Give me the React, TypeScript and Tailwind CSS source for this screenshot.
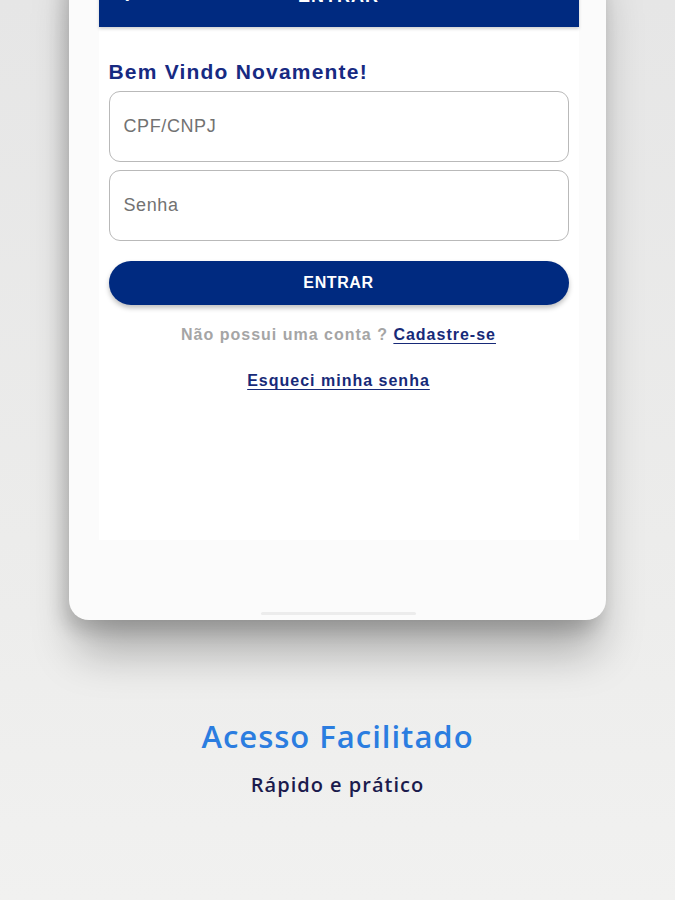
import React from "react";

export default function App() {
  const sans = { fontFamily: '"Liberation Sans", Arial, sans-serif' };
  const display = { fontFamily: '"Open Sans", "Noto Sans", sans-serif' };
  return (
    <div className="relative w-[675px] h-[900px] overflow-hidden bg-[linear-gradient(180deg,#e6e6e6_0%,#ececeb_60%,#f1f1f0_100%)]">
      <div className="flex flex-col items-center">
        {/* phone */}
        <div className="ml-[-1px] mt-[-60px] w-[537px] h-[680px] rounded-[20px] bg-[#fbfbfb] shadow-[0_40px_45px_-8px_rgba(0,0,0,0.28),-6px_10px_18px_rgba(0,0,0,0.16)] pl-[30px] pr-[27px] flex flex-col">
          <div className="h-[600px] bg-white flex flex-col" style={sans}>
            {/* header */}
            <div className="h-[87px] bg-[#002a80] shadow-[0_2px_3px_rgba(0,0,0,0.18)] relative flex items-end justify-center pb-[22px]">
              <span className="absolute left-[24px] bottom-[20px] text-white text-[22px] font-bold leading-none">‹</span>
              <span className="text-white text-[18px] font-bold leading-none tracking-[1px]">ENTRAR</span>
            </div>
            <div className="px-[10px] flex flex-col">
              <h1 className="mt-[33px] text-[21px] leading-[24px] font-bold text-[#172a82] tracking-[1.2px]">Bem Vindo Novamente!</h1>
              <div className="mt-[7px] h-[71px] rounded-[11px] border border-[#b9b9b9] flex items-center px-[14px]">
                <span className="text-[18px] text-[#727272] tracking-[0.6px]">CPF/CNPJ</span>
              </div>
              <div className="mt-[8px] h-[71px] rounded-[11px] border border-[#b9b9b9] flex items-center px-[14px]">
                <span className="text-[18px] text-[#727272] tracking-[0.6px]">Senha</span>
              </div>
              <button className="mt-[20px] h-[44px] rounded-full bg-[#002a80] shadow-[0_3px_5px_rgba(0,0,0,0.25)] text-white text-[16px] font-bold tracking-[0.6px] flex items-center justify-center">
                ENTRAR
              </button>
              <p className="mt-[20px] text-center text-[16px] leading-[20px] font-bold tracking-[1px]">
                <span className="text-[#a5a5a5]">Não possui uma conta ? </span>
                <span className="text-[#172a78] underline underline-offset-[3px]">Cadastre-se</span>
              </p>
              <p className="mt-[26px] text-center text-[16px] leading-[20px] font-bold tracking-[1px] text-[#172a78] underline underline-offset-[3px]">
                Esqueci minha senha
              </p>
            </div>
          </div>
          <div className="flex-1 flex items-end justify-center pb-[5px]">
            <div className="w-[155px] h-[3px] rounded-full bg-[#ececec]" />
          </div>
        </div>

        <h2 className="mt-[98px] text-[31px] leading-[36px] font-semibold text-[#2b7de0] tracking-[1px]" style={display}>
          Acesso Facilitado
        </h2>
        <p className="mt-[18px] text-[20px] leading-[26px] font-semibold text-[#1b1b4d] tracking-[1px]" style={display}>
          Rápido e prático
        </p>
      </div>
    </div>
  );
}
